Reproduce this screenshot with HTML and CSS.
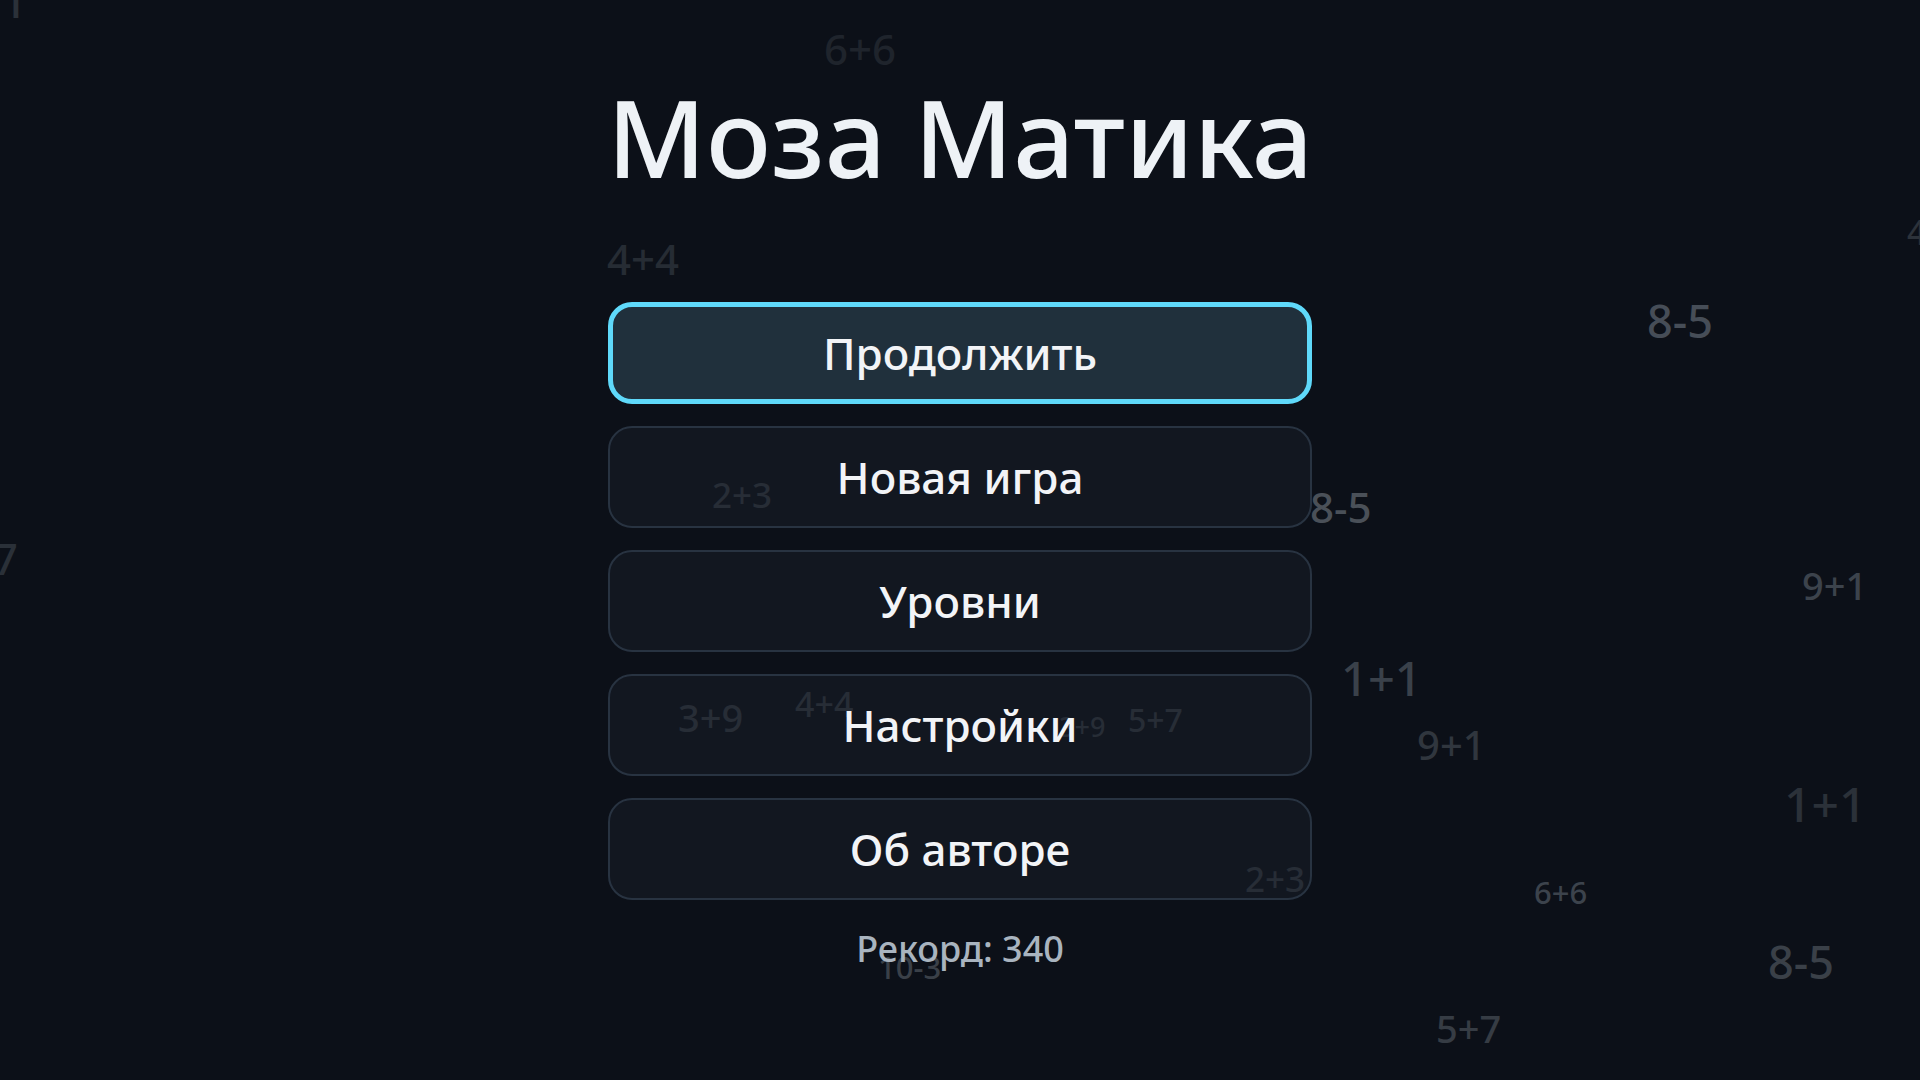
FILE: index.html
```html
<!DOCTYPE html>
<html lang="ru">
<head>
    <meta charset="UTF-8">
    <meta name="viewport" content="width=device-width, initial-scale=1.0">
    <title>Моза Матика</title>
    <link rel="stylesheet" href="styles.css">
</head>
<body>
    <div class="screen">
        <!-- floating examples behind the menu -->
        <div class="examples" id="examples"></div>

        <div class="menu">
            <h1 class="title">Моза Матика</h1>
            <div class="buttons">
                <button class="btn active">Продолжить</button>
                <button class="btn">Новая игра</button>
                <button class="btn">Уровни</button>
                <button class="btn">Настройки</button>
                <button class="btn">Об авторе</button>
            </div>
            <div class="record">Рекорд: 340</div>
        </div>
    </div>

    <script>
        // text, x, y, font size, colour
        const examples = [
            ['9+1', -50, -22, 45, '#2b3139'],
            ['6+6', 824, 28, 42, '#1f242c'],
            ['4+4', 607, 238, 42, '#262c34'],
            ['4', 1907, 215, 34, '#2c323a'],
            ['8-5', 1647, 298, 45, '#464d57'],
            ['2+3', 712, 477, 35, '#3a4048'],
            ['8-5', 1310, 486, 42, '#4a5058'],
            ['5+7', -56, 537, 43, '#2a3038'],
            ['9+1', 1802, 566, 38, '#3c434c'],
            ['1+1', 1341, 655, 47, '#3a414a'],
            ['4+4', 795, 687, 34, '#3a4048'],
            ['3+9', 678, 698, 38, '#3a4048'],
            ['5+7', 1128, 704, 32, '#3a4048'],
            ['3+9', 1059, 713, 27, '#3a4048'],
            ['9+1', 1417, 725, 40, '#30363e'],
            ['1+1', 1784, 780, 48, '#2b3139'],
            ['2+3', 1245, 861, 35, '#3a4048'],
            ['6+6', 1534, 877, 31, '#3c434c'],
            ['8-5', 1768, 939, 45, '#3a4048'],
            ['10-3', 878, 952, 31, '#3a4048'],
            ['5+7', 1436, 1009, 38, '#363c44']
        ];

        const layer = document.getElementById('examples');
        examples.forEach(function (e) {
            const span = document.createElement('span');
            span.className = 'example';
            span.textContent = e[0];
            span.style.left = e[1] + 'px';
            span.style.top = e[2] + 'px';
            span.style.fontSize = e[3] + 'px';
            span.style.color = e[4];
            layer.appendChild(span);
        });
    </script>
</body>
</html>
```

FILE: styles.css
```css
body {
    margin: 0;
    padding: 0;
    background-color: #0c1018;
    font-family: "Noto Sans", "Open Sans", sans-serif;
    overflow: hidden;
}
.screen {
    position: relative;
    width: 1920px;
    height: 1080px;
    overflow: hidden;
}
.examples {
    position: absolute;
    top: 0;
    left: 0;
    right: 0;
    bottom: 0;
    z-index: 0;
}
.example {
    position: absolute;
    line-height: 1;
    font-weight: 500;
    white-space: nowrap;
}
.menu {
    position: relative;
    z-index: 1;
    display: flex;
    flex-direction: column;
    align-items: center;
    padding-top: 83px;
}
.title {
    margin: 0 0 111px;
    font-size: 108px;
    line-height: 1;
    font-weight: 500;
    color: #eef2f6;
}
.buttons {
    display: flex;
    flex-direction: column;
    gap: 22px;
    width: 704px;
}
.btn {
    display: flex;
    align-items: center;
    justify-content: center;
    box-sizing: border-box;
    height: 102px;
    padding: 0;
    border: 2px solid #283341;
    border-radius: 24px;
    background-color: rgba(24, 30, 40, 0.55);
    color: #f2f4f7;
    font-family: inherit;
    font-size: 44px;
    font-weight: 500;
    cursor: pointer;
}
.btn.active {
    border: 5px solid #5fd9fa;
    background-color: #20303c;
}
.record {
    margin-top: 31px;
    font-size: 36px;
    line-height: 1;
    font-weight: 500;
    color: #a9b4bf;
}
```
